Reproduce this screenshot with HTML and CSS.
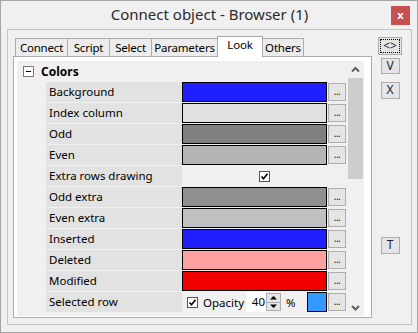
FILE: index.html
```html
<html>
<head>
  <link rel="stylesheet" href="styles.css">
</head>
<body>
<div class="window">
  <div class="titlebar">
    <span></span>
    <div class="title">Connect object - Browser (1)</div>
    <div class="close">x</div>
  </div>

  <div class="client">
    <div class="tab-control">
      <div class="tabs">
        <div class="tab tab-connect">Connect</div>
        <div class="tab tab-script">Script</div>
        <div class="tab tab-select">Select</div>
        <div class="tab tab-params">Parameters</div>
        <div class="tab tab-look active">Look</div>
        <div class="tab tab-others">Others</div>
      </div>

      <div class="page">
        <div class="props">
          <div class="category">
            <span class="toggle"><svg width="11" height="11" viewBox="0 0 11 11"><rect x="0.5" y="0.5" width="10" height="10" fill="#fff" stroke="#7a7a7a"/><path d="M3 5.5h5" stroke="#000"/></svg></span>
            <b>Colors</b>
          </div>

          <div class="row"><div class="label">Background</div><div class="value"><span class="swatch" style="background:#2020ff"></span><span class="dots">...</span></div></div>
          <div class="row"><div class="label">Index column</div><div class="value"><span class="swatch" style="background:#e0e0e0"></span><span class="dots">...</span></div></div>
          <div class="row"><div class="label">Odd</div><div class="value"><span class="swatch" style="background:#808080"></span><span class="dots">...</span></div></div>
          <div class="row"><div class="label">Even</div><div class="value"><span class="swatch" style="background:#b4b4b4"></span><span class="dots">...</span></div></div>
          <div class="row"><div class="label">Extra rows drawing</div><div class="value center"><span class="check"><svg width="11" height="11" viewBox="0 0 11 11"><rect x="0.5" y="0.5" width="10" height="10" fill="#fff" stroke="#555"/><path d="M2.5 5.5l2 2.2 4-5" fill="none" stroke="#000" stroke-width="1.6"/></svg></span></div></div>
          <div class="row"><div class="label">Odd extra</div><div class="value"><span class="swatch" style="background:#909090"></span><span class="dots">...</span></div></div>
          <div class="row"><div class="label">Even extra</div><div class="value"><span class="swatch" style="background:#c0c0c0"></span><span class="dots">...</span></div></div>
          <div class="row"><div class="label">Inserted</div><div class="value"><span class="swatch" style="background:#2020ff"></span><span class="dots">...</span></div></div>
          <div class="row"><div class="label">Deleted</div><div class="value"><span class="swatch" style="background:#ffa0a0"></span><span class="dots">...</span></div></div>
          <div class="row"><div class="label">Modified</div><div class="value"><span class="swatch" style="background:#f00000"></span><span class="dots">...</span></div></div>
          <div class="row">
            <div class="label">Selected row</div>
            <div class="value selected">
              <span class="check"><svg width="11" height="11" viewBox="0 0 11 11"><rect x="0.5" y="0.5" width="10" height="10" fill="#fff" stroke="#555"/><path d="M2.5 5.5l2 2.2 4-5" fill="none" stroke="#000" stroke-width="1.6"/></svg></span>
              <span class="opacity">Opacity</span>
              <span class="edit">40</span>
              <span class="spin">
                <span class="spin-btn"><svg width="9" height="5" viewBox="0 0 9 5"><path d="M1 4.5L4.5 1 8 4.5z" fill="#000"/></svg></span>
                <span class="spin-btn"><svg width="9" height="5" viewBox="0 0 9 5"><path d="M1 0.5L4.5 4 8 0.5z" fill="#000"/></svg></span>
              </span>
              <span class="percent">%</span>
              <span class="swatch small" style="background:#3399ff"></span>
              <span class="dots">...</span>
            </div>
          </div>
        </div>

        <div class="scrollbar">
          <div class="arrow"><svg width="17" height="17" viewBox="0 0 17 17"><path d="M5 10.5l3.5-3.5 3.5 3.5" fill="none" stroke="#606060" stroke-width="2"/></svg></div>
          <div class="track"><div class="thumb"></div></div>
          <div class="arrow"><svg width="17" height="17" viewBox="0 0 17 17"><path d="M5 7l3.5 3.5 3.5-3.5" fill="none" stroke="#606060" stroke-width="2"/></svg></div>
        </div>
      </div>
    </div>

    <div class="side">
      <div class="side-btn focus"><span>&lt;&gt;</span></div>
      <div class="side-btn btn-v">V</div>
      <div class="side-btn btn-x">X</div>
      <div class="side-btn btn-t">T</div>
    </div>
  </div>
</div>
</body>
</html>
```

FILE: styles.css
```css
body {
  margin: 0;
  font-family: "Noto Sans", "Open Sans", sans-serif;
  font-size: 11.5px;
  color: #000;
}
.window {
  width: 418px;
  height: 333px;
  box-sizing: border-box;
  border: 1px solid #a6a6a6;
  background-color: #f0f0f0;
  padding: 0 5px 7px 6px;
  display: flex;
  flex-direction: column;
}
.titlebar {
  height: 28px;
  display: grid;
  grid-template-columns: 1fr auto 1fr;
  align-items: start;
}
.title {
  font-size: 15px;
  color: #2b2b2b;
  padding-top: 3px;
}
.close {
  justify-self: end;
  width: 19px;
  height: 19px;
  margin-top: 5px;
  margin-right: 2px;
  background-color: #c75050;
  color: #fff;
  font-weight: bold;
  font-size: 11px;
  line-height: 17px;
  text-align: center;
}
.client {
  flex: 1;
  border: 1px solid #c4c4c4;
  padding: 6px 0 0 5px;
  display: flex;
}
.tab-control {
  width: 359px;
  display: flex;
  flex-direction: column;
}
.tabs {
  height: 20px;
  display: flex;
  align-items: flex-end;
  padding-left: 2px;
  position: relative;
  z-index: 1;
}
.tab {
  height: 18px;
  box-sizing: border-box;
  border: 1px solid #acacac;
  border-bottom: none;
  margin-left: -1px;
  background-color: #ececec;
  text-align: center;
  line-height: 15px;
  padding-top: 1px;
  letter-spacing: -0.2px;
  white-space: nowrap;
}
.tab-connect { width: 53px; margin-left: 0; }
.tab-script { width: 43px; }
.tab-select { width: 43px; }
.tab-params { width: 67px; }
.tab-look { width: 46px; }
.tab-others { width: 42px; }
.tab.active {
  height: 21px;
  margin-bottom: -1px;
  background-color: #fff;
  line-height: 14px;
}
.page {
  height: 262px;
  box-sizing: border-box;
  border: 1px solid #acacac;
  background-color: #fff;
  padding: 4px 7px 1px 3px;
  display: flex;
}
.props {
  width: 330px;
  background-color: #f0f0f0;
  display: flex;
  flex-direction: column;
  gap: 1px;
}
.category {
  height: 20px;
  display: flex;
  align-items: center;
  padding-left: 6px;
  font-size: 12px;
}
.toggle {
  width: 11px;
  height: 11px;
  margin-right: 7px;
  display: flex;
}
.row {
  height: 20px;
  display: grid;
  grid-template-columns: 29px 136px 165px;
}
.label {
  grid-column: 2;
  background-color: #e2e2e2;
  padding-left: 3px;
  line-height: 19px;
  white-space: nowrap;
}
.value {
  display: flex;
  align-items: center;
  gap: 1px;
}
.value.center {
  justify-content: center;
}
.swatch {
  width: 145px;
  height: 20px;
  box-sizing: border-box;
  border: 1px solid #000;
}
.swatch.small {
  width: 20px;
}
.dots {
  width: 18px;
  height: 18px;
  box-sizing: border-box;
  border: 1px solid #adadad;
  background-color: #e5e5e5;
  text-align: center;
  line-height: 15px;
  font-size: 10px;
  letter-spacing: -0.5px;
  color: #202040;
}
.check {
  width: 11px;
  height: 11px;
  display: flex;
}
.selected {
  gap: 0;
}
.selected .check {
  margin-left: 5px;
}
.opacity {
  margin-left: 5px;
  width: 43px;
}
.edit {
  width: 20px;
  height: 20px;
  background-color: #fff;
  text-align: right;
  line-height: 19px;
  padding-right: 1px;
  box-sizing: border-box;
}
.spin {
  width: 15px;
  height: 18px;
  display: flex;
  flex-direction: column;
}
.spin-btn {
  flex: 1;
  box-sizing: border-box;
  border: 1px solid #adadad;
  background-color: #e5e5e5;
  display: flex;
  align-items: center;
  justify-content: center;
}
.spin-btn + .spin-btn {
  border-top: none;
}
.percent {
  margin-left: 5px;
  width: 21px;
}
.selected .swatch.small {
  margin-right: 1px;
}
.scrollbar {
  width: 17px;
  background-color: #f0f0f0;
  display: flex;
  flex-direction: column;
}
.arrow {
  height: 17px;
}
.track {
  flex: 1;
}
.thumb {
  height: 101px;
  margin: 0 1px;
  background-color: #cdcdcd;
}
.side {
  width: 36px;
  display: flex;
  flex-direction: column;
  align-items: center;
}
.side-btn {
  width: 19px;
  height: 17px;
  box-sizing: border-box;
  border: 1px solid #adadad;
  background-color: #e5e5e5;
  text-align: center;
  line-height: 14px;
  font-size: 12px;
  color: #1c1c3c;
}
.side-btn.focus {
  width: 24px;
  height: 18px;
  margin-top: 1px;
  padding: 1px;
}
.side-btn.focus span {
  display: block;
  height: 14px;
  border: 1px dotted #000;
  box-sizing: border-box;
  line-height: 11px;
}
.btn-v {
  height: 16px;
  margin-top: 3px;
}
.btn-x {
  margin-top: 8px;
}
.btn-t {
  margin-top: 138px;
}
```
